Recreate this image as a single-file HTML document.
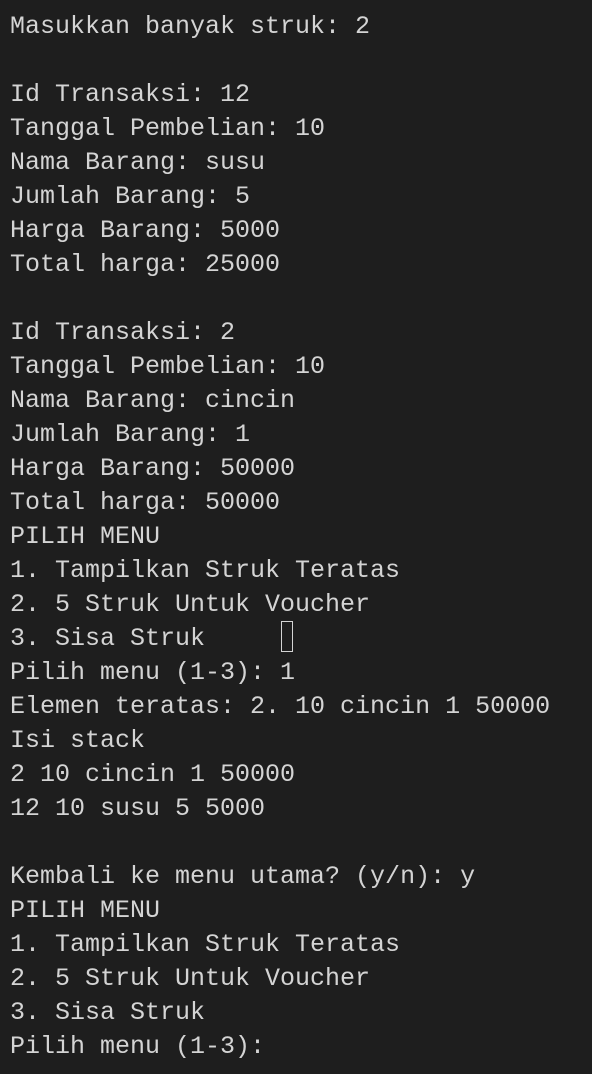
<!DOCTYPE html>
<html><head><meta charset="utf-8"><style>
html,body{margin:0;padding:0;background:#1e1e1e;width:592px;height:1074px;overflow:hidden}
pre{margin:0;padding:10px 0 0 10px;font-family:"Liberation Mono","DejaVu Sans Mono",monospace;font-size:25px;line-height:34px;color:#d4d4d4;position:relative}
.cur{position:absolute;left:281px;top:621px;width:10px;height:29px;border:1.5px solid #d4d4d4}
</style></head><body><pre>Masukkan banyak struk: 2

Id Transaksi: 12
Tanggal Pembelian: 10
Nama Barang: susu
Jumlah Barang: 5
Harga Barang: 5000
Total harga: 25000

Id Transaksi: 2
Tanggal Pembelian: 10
Nama Barang: cincin
Jumlah Barang: 1
Harga Barang: 50000
Total harga: 50000
PILIH MENU
1. Tampilkan Struk Teratas
2. 5 Struk Untuk Voucher
3. Sisa Struk
Pilih menu (1-3): 1
Elemen teratas: 2. 10 cincin 1 50000
Isi stack
2 10 cincin 1 50000
12 10 susu 5 5000

Kembali ke menu utama? (y/n): y
PILIH MENU
1. Tampilkan Struk Teratas
2. 5 Struk Untuk Voucher
3. Sisa Struk
Pilih menu (1-3):</pre><div class="cur"></div></body></html>
